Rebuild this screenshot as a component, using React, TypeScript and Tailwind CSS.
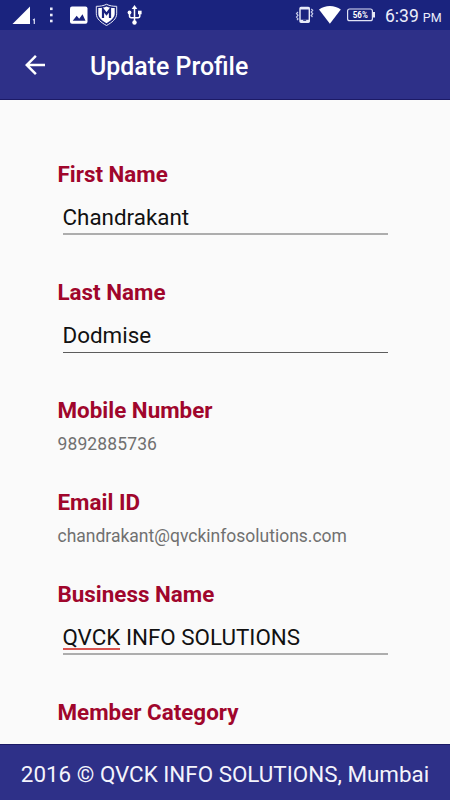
import type { ReactNode } from 'react';

function StatusBar() {
  return (
    <div className="flex h-[30px] shrink-0 items-center bg-[#1a237e] text-white">
      {/* Notifications */}
      <svg className="h-[30px] w-[150px]" viewBox="0 0 150 30" fill="none">
        <path d="M12.5 24L30 6.5V24z" fill="#fff" />
        <path d="M33 20l1.3-.8V24" stroke="#dfe2f5" strokeWidth="1.2" />
        <g fill="#e8eaf8">
          <rect x="50" y="7.5" width="2.6" height="2.6" />
          <rect x="50" y="13.7" width="2.6" height="2.6" />
          <rect x="50" y="19.7" width="2.6" height="2.6" />
        </g>
        <rect x="70" y="6.5" width="17.5" height="17.3" rx="2" fill="#fff" />
        <path d="M72.7 20.8l4-5 2.5 3 3.3-4.5 3 6.5z" fill="#1a237e" />
        {/* Shield */}
        <path d="M106.5 4.300c3 1.500 6.500 2.100 10.200 2v7.500c0 5-5 8.900-10.200 11.700-5.200-2.800-10.200-6.700-10.200-11.700V6.300c3.700.1 7.200-.5 10.200-2z" fill="#1a237e" stroke="#e8eaf8" strokeWidth="1" />
        <path d="M106.500 6.400c2.500 1.200 5.200 1.700 8.200 1.700v5.600c0 3.800-4 7-8.200 9.500-4.200-2.500-8.200-5.700-8.200-9.500V8.100c3 0 5.700-.5 8.200-1.700z" fill="#fff" />
        <path d="M103 18V9.500l3.500 4.500 3.500-4.500V18" stroke="#1a237e" strokeWidth="2.200" />
        {/* USB */}
        <g stroke="#fff" strokeWidth="1.5">
          <path d="M134.500 22V8M129.500 13V16c0 1 .7 1.700 1.800 1.700h6.700c1 0 1.800-.7 1.800-1.700v-3" />
        </g>
        <g fill="#fff">
          <path d="M134.500 5l2.800 4h-5.600z" />
          <circle cx="129.500" cy="12.500" r="1.900" />
          <rect x="138" y="10.700" width="3.600" height="3.600" />
          <circle cx="134.500" cy="22.500" r="2.200" />
        </g>
      </svg>

      {/* Vibrate, wifi, battery */}
      <svg className="ml-auto h-[30px] w-[90px]" viewBox="290 0 90 30" fill="none">
        <rect x="300" y="7.500" width="9.300" height="14.800" rx="1" stroke="#e8eaf8" strokeWidth="1.400" />
        <path d="M300 8.400h9.300M300 20.800h9.300" stroke="#e8eaf8" strokeWidth="2.200" />
        <path d="M303.200 20.300h3" stroke="#1a237e" strokeWidth="1" />
        <path d="M298 12l-1.500 1.500 1.500 1.800-1.500 1.800 1.500 1.800-1 1.300M311.200 9l1.500 1.300-1.500 1.700 1.500 1.800-1.500 1.700 1.300 1.500" stroke="#c5cae9" strokeWidth="1.200" />
        <path d="M319 9.500c6-4.800 15.800-4.800 21.800 0L329.900 23.800z" fill="#fff" />
        <rect x="347.600" y="9" width="24.800" height="11.700" rx="2" stroke="#dfe2f5" strokeWidth="1.200" />
        <path d="M374 12v5.500" stroke="#fff" strokeWidth="1.800" />
        <text x="360.300" y="18.300" textAnchor="middle" fill="#fff" fontSize="9.500" fontWeight="700" fontFamily="Roboto, sans-serif" textLength="15" lengthAdjust="spacingAndGlyphs">56%</text>
      </svg>
      <div className="h-[30px] w-[70px] pt-px pl-[5px] text-[17.5px] leading-[31px] whitespace-nowrap text-[#eceefa]">
        6:39<span className="ml-1 text-[12.5px]">PM</span>
      </div>
    </div>
  );
}

function Label({ children }: { children: ReactNode }) {
  return <h2 className="h-[26px] text-[22.4px] leading-[26px] font-bold text-[#a0062c]">{children}</h2>;
}

function InputField({ label, line, children }: { label: string; line: string; children: ReactNode }) {
  return (
    <div className="h-[118.4px]">
      <Label>{label}</Label>
      <div className={`mt-[17px] mr-[5px] ml-[5px] h-[31px] text-[22.4px] leading-[27px] text-[#111] ${line}`}>
        {children}
      </div>
    </div>
  );
}

function TextField({ label, value, spacing = '' }: { label: string; value: string; spacing?: string }) {
  return (
    <div className="h-[91.7px]">
      <Label>{label}</Label>
      <p className={`mt-[11px] text-[17.5px] leading-[21px] text-[#707070] ${spacing}`}>{value}</p>
    </div>
  );
}

export default function App() {
  return (
    <div className="flex h-[800px] w-[450px] flex-col overflow-hidden bg-[#fafafa] font-['Roboto',sans-serif]">
      <StatusBar />

      <header className="flex h-[70px] shrink-0 items-center border-b border-[#1c1a66] bg-[#2e3088] text-white">
        <svg className="ml-5 size-[30px]" viewBox="0 0 24 24" fill="#fff">
          <path d="M20 11H7.830l5.590-5.590L12 4l-8 8 8 8 1.410-1.410L7.830 13H20v-2z" />
        </svg>
        <h1 className="ml-10 pt-[5px] text-[24.9px] leading-[30px] font-medium">Update Profile</h1>
      </header>

      <main className="min-h-0 flex-1 overflow-hidden px-[57.5px] pt-[60.5px]">
        <InputField label="First Name" line="border-b-2 border-[#adadad]">Chandrakant</InputField>
        <InputField label="Last Name" line="border-b border-[#5c5c5c]">Dodmise</InputField>
        <TextField label="Mobile Number" value="9892885736" spacing="tracking-[0.12px]" />
        <TextField label="Email ID" value="chandrakant@qvckinfosolutions.com" />
        <InputField label="Business Name" line="border-b-2 border-[#adadad]">
          <span className="inline-block h-[26px] border-b-2 border-[#d9534f]">QVCK</span> INFO SOLUTIONS
        </InputField>
        <Label>Member Category</Label>
      </main>

      <footer className="h-[56px] shrink-0 border-t border-[#1c1a66] bg-[#2e3088] text-center text-[22.4px] leading-[58px] text-[#f4f4fc]">
        2016 © QVCK INFO SOLUTIONS, Mumbai
      </footer>
    </div>
  );
}
